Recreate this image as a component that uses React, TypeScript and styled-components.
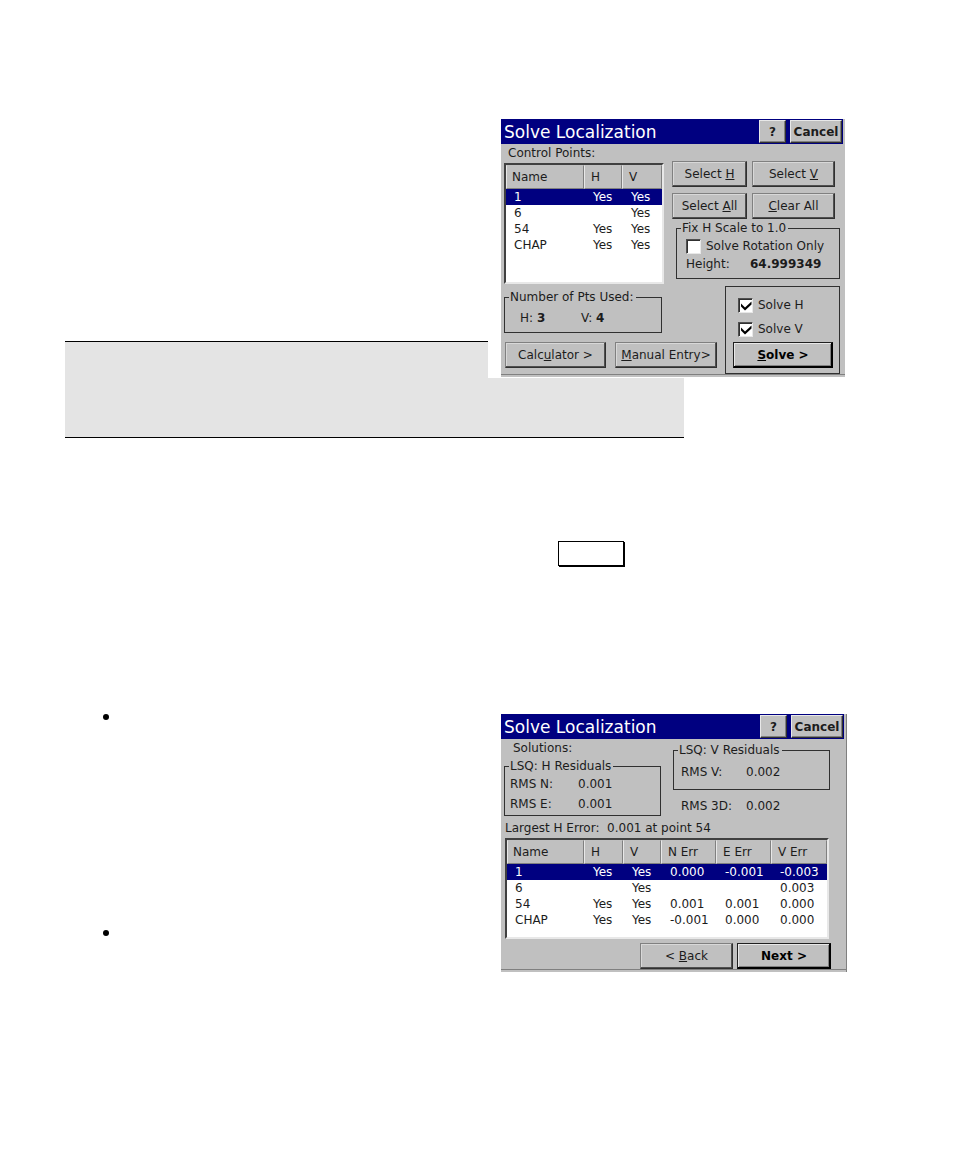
import React from "react";
import styled, { createGlobalStyle } from "styled-components";

const GlobalStyle = createGlobalStyle`
  *, *::before, *::after { box-sizing: border-box; }
  body {
    margin: 0;
    background: #fff;
    color: #1c1c1c;
    font-family: "DejaVu Sans", sans-serif;
    font-size: 12px;
    line-height: 16px;
  }
`;

const Page = styled.main`
  padding: 119px 107px 187px 65px;
`;

const Section = styled.section`
  display: flow-root;
`;

const Figure = styled.figure`
  float: right;
  margin: 0 2px 0 0;
  padding: 0 0 1px 13px;
  background: #fff;
`;

const Note = styled.aside`
  margin: 222px 163px 0 0;
  min-height: 97px;
  background: #e4e4e4;
  border: solid #000;
  border-width: 1px 0;
`;

const KeyLine = styled.div`
  display: flex;
  justify-content: flex-end;
  margin-top: 103px;
  padding-right: 223px;
`;

const KeyBox = styled.span`
  width: 66px;
  height: 25px;
  border: 1px solid #000;
  box-shadow: 1px 1px #000;
`;

const Steps = styled.section`
  display: flex;
  justify-content: space-between;
  margin-top: 148px;
`;

const BulletList = styled.ul`
  flex: 1;
  margin: 0;
  padding: 0 0 0 38px;
  list-style: none;
`;

const BulletItem = styled.li`
  min-height: 216px;
  &::before {
    content: "";
    display: block;
    width: 6px;
    height: 6px;
    border-radius: 50%;
    background: #000;
  }
  &:last-child { min-height: 42px; }
`;

const Dialog = styled.section<{ $edge?: boolean }>`
  width: ${(p) => (p.$edge ? 346 : 344)}px;
  padding-bottom: 2px;
  background: #c0c0c0;
  border-right: ${(p) => (p.$edge ? "1px solid #808080" : "0")};
`;

const TitleBar = styled.header`
  display: flex;
  align-items: center;
  gap: 4px;
  height: 25px;
  margin-right: 2px;
  padding: 0 1px 0 3px;
  background: #000080;
`;

const Title = styled.h2`
  flex: 1;
  margin: 0;
  color: #fff;
  font-size: 17px;
  font-weight: 400;
  line-height: 24px;
  white-space: nowrap;
`;

const Button = styled.button<{ $strong?: boolean; $width?: number; $title?: boolean }>`
  width: ${(p) => (p.$width ? p.$width + "px" : "100%")};
  height: ${(p) => (p.$title ? 23 : 26)}px;
  padding: 0;
  background: #c0c0c0;
  color: ${(p) => (p.$strong ? "#000" : "#1c1c1c")};
  border: 1px solid;
  border-color: ${(p) =>
    p.$title ? "#e8e8e8 #303030 #303030 #e8e8e8" : p.$strong ? "#202020 #000 #000 #202020" : "#808080 #303030 #303030 #808080"};
  box-shadow: ${(p) =>
    p.$title
      ? "inset -1px -1px #808080"
      : p.$strong
      ? "inset -1px -1px #000, inset 1px 1px #e8e8e8, inset -2px -2px #808080"
      : "inset -1px -1px #505050, inset 1px 1px #d8d8d8"};
  font-family: inherit;
  font-size: 12px;
  font-weight: ${(p) => (p.$strong || p.$title ? 700 : 400)};
  line-height: 16px;
  white-space: nowrap;
`;

const Content = styled.div`
  padding: 0 5px 0 3px;
  border-bottom: 1px solid #808080;
`;

const Row = styled.div`
  display: flex;
  justify-content: space-between;
`;

const PointsPane = styled.div`
  width: 160px;
`;

const Caption = styled.div<{ $indent: number }>`
  height: 19px;
  padding: 1px 0 0 ${(p) => p.$indent}px;
  white-space: nowrap;
`;

const ListBox = styled.div<{ $height: number }>`
  height: ${(p) => p.$height}px;
  background: #fff;
  border: 2px solid;
  border-color: #404040 #e8e8e8 #e8e8e8 #404040;
`;

const Table = styled.table`
  width: 100%;
  table-layout: fixed;
  border-collapse: separate;
  border-spacing: 0;
`;

const HeadCell = styled.th`
  height: 24px;
  padding: 0 0 0 6px;
  background: #c0c0c0;
  border: 1px solid;
  border-color: #c0c0c0 #808080 #808080 #e8e8e8;
  font-weight: 400;
  text-align: left;
  white-space: nowrap;
  &:first-child { padding-left: 5px; }
`;

const BodyRow = styled.tr<{ $selected: boolean }>`
  background: ${(p) => (p.$selected ? "#000080" : "#fff")};
  color: ${(p) => (p.$selected ? "#fff" : "#1c1c1c")};
`;

const Cell = styled.td`
  height: 16px;
  padding: 0 0 0 9px;
  line-height: 16px;
  white-space: nowrap;
  &:first-child { padding-left: 8px; }
`;

const ActionPane = styled.div`
  width: 164px;
  padding-top: 17px;
`;

const ButtonGrid = styled.div`
  display: grid;
  grid-template-columns: 75px 83px;
  gap: 6px 5px;
  margin: 0 0 1px -4px;
`;

const Group = styled.fieldset<{ $height: number }>`
  min-width: 0;
  height: ${(p) => p.$height}px;
  margin: 0;
  padding: 0 0 0 5px;
  border: 1px solid #303030;
`;

const Legend = styled.legend`
  margin-left: -1px;
  padding: 0 2px 0 1px;
  white-space: nowrap;
`;

const CheckLabel = styled.label`
  display: flex;
  align-items: center;
  gap: 5px;
  height: 18px;
  white-space: nowrap;
`;

const CheckFrame = styled.span`
  display: grid;
  width: 15px;
  height: 15px;
  & > * { grid-area: 1 / 1; }
  svg { visibility: hidden; pointer-events: none; z-index: 1; }
  input:checked + svg { visibility: visible; }
`;

const CheckInput = styled.input`
  appearance: none;
  width: 15px;
  height: 15px;
  margin: 0;
  background: #fff;
  border: 1px solid;
  border-color: #505050 #e8e8e8 #e8e8e8 #505050;
  box-shadow: inset 1px 1px #303030;
`;

const Reading = styled.div<{ $label: number; $line?: number }>`
  display: grid;
  grid-template-columns: ${(p) => p.$label}px auto;
  justify-content: start;
  line-height: ${(p) => p.$line ?? 18}px;
  white-space: nowrap;
`;

const ScaleFields = styled.div`
  display: grid;
  padding: 1px 0 0 4px;
`;

const Lower = styled(Row)`
  padding: 2px 0 0;
`;

const UsedPane = styled.div`
  width: 213px;
  padding-top: 3px;
`;

const UsedGroup = styled(Group)`
  width: 158px;
`;

const Counts = styled.div`
  display: grid;
  grid-template-columns: 61px auto;
  justify-content: start;
  padding: 5px 0 0 10px;
`;

const PairRow = styled(Row)`
  margin-top: 9px;
  padding-left: 1px;
`;

const SolvePanel = styled.div`
  width: 115px;
  height: 88px;
  padding: 9px 6px 0 7px;
  border: 1px solid #303030;
`;

const SolveChecks = styled.div`
  display: grid;
  gap: 6px;
  padding: 0 0 4px 5px;
`;

const Residuals = styled(Row)`
  height: 80px;
  padding-right: 11px;
`;

const ResidualPane = styled.div<{ $top?: number }>`
  width: 157px;
  padding-top: ${(p) => p.$top ?? 0}px;
`;

const Loose = styled.div`
  padding: 7px 0 0 8px;
`;

const ValuePad = styled.div`
  padding: 5px 0 0 2px;
`;

const ResultBox = styled.div`
  padding: 0 12px 4px 1px;
`;

const Footer = styled.div`
  display: flex;
  justify-content: flex-end;
  gap: 4px;
  padding-right: 10px;
`;

function Check({ label, checked }: { label: string; checked?: boolean }) {
  return (
    <CheckLabel>
      <CheckFrame>
        <CheckInput type="checkbox" defaultChecked={checked} />
        <svg width="15" height="15" viewBox="0 0 15 15" aria-hidden="true">
          <path d="M3 5.5v3L7 12.5l6.5-6v-3L7 9.5z" fill="#000" />
        </svg>
      </CheckFrame>
      {label}
    </CheckLabel>
  );
}

function TitleRow() {
  return (
    <TitleBar>
      <Title>Solve Localization</Title>
      <Button type="button" $title $width={27}>?</Button>
      <Button type="button" $title $width={52}>Cancel</Button>
    </TitleBar>
  );
}

type TableProps = { heads: string[]; widths: (number | undefined)[]; rows: string[][] };

function PointTable({ heads, widths, rows }: TableProps) {
  return (
    <Table>
      <colgroup>
        {widths.map((w, i) => <col key={i} width={w} />)}
      </colgroup>
      <thead>
        <tr>{heads.map((h) => <HeadCell key={h} scope="col">{h}</HeadCell>)}</tr>
      </thead>
      <tbody>
        {rows.map((r, i) => (
          <BodyRow key={r[0]} $selected={i === 0}>
            {r.map((c, j) => <Cell key={j}>{c}</Cell>)}
          </BodyRow>
        ))}
      </tbody>
    </Table>
  );
}

const points = [
  ["1", "Yes", "Yes"],
  ["6", "", "Yes"],
  ["54", "Yes", "Yes"],
  ["CHAP", "Yes", "Yes"],
];

const results = [
  ["1", "Yes", "Yes", "0.000", "-0.001", "-0.003"],
  ["6", "", "Yes", "", "", "0.003"],
  ["54", "Yes", "Yes", "0.001", "0.001", "0.000"],
  ["CHAP", "Yes", "Yes", "-0.001", "0.000", "0.000"],
];

function SolveDialog() {
  return (
    <Dialog>
      <TitleRow />
      <Content>
        <Row>
          <PointsPane>
            <Caption $indent={4}>Control Points:</Caption>
            <ListBox $height={121}>
              <PointTable heads={["Name", "H", "V"]} widths={[78, 38, undefined]} rows={points} />
            </ListBox>
          </PointsPane>
          <ActionPane>
            <ButtonGrid>
              <Button type="button">Select <u>H</u></Button>
              <Button type="button">Select <u>V</u></Button>
              <Button type="button">Select <u>A</u>ll</Button>
              <Button type="button"><u>C</u>lear All</Button>
            </ButtonGrid>
            <Group $height={59}>
              <Legend>Fix H Scale to 1.0</Legend>
              <ScaleFields>
                <Check label="Solve Rotation Only" />
                <Reading $label={64}><span>Height:</span><b>64.999349</b></Reading>
              </ScaleFields>
            </Group>
          </ActionPane>
        </Row>
        <Lower>
          <UsedPane>
            <UsedGroup $height={44}>
              <Legend>Number of Pts Used:</Legend>
              <Counts>
                <span>H: <b>3</b></span>
                <span>V: <b>4</b></span>
              </Counts>
            </UsedGroup>
            <PairRow>
              <Button type="button" $width={101}>Calc<u>u</u>lator &gt;</Button>
              <Button type="button" $width={102}><u>M</u>anual Entry&gt;</Button>
            </PairRow>
          </UsedPane>
          <SolvePanel>
            <SolveChecks>
              <Check label="Solve H" checked />
              <Check label="Solve V" checked />
            </SolveChecks>
            <Button type="button" $strong><u>S</u>olve &gt;</Button>
          </SolvePanel>
        </Lower>
      </Content>
    </Dialog>
  );
}

function ResultsDialog() {
  return (
    <Dialog $edge>
      <TitleRow />
      <Content>
        <Residuals>
          <ResidualPane>
            <Caption $indent={9}>Solutions:</Caption>
            <Group $height={58}>
              <Legend>LSQ: H Residuals</Legend>
              <Reading $label={68} $line={20}><span>RMS N:</span><span>0.001</span></Reading>
              <Reading $label={68} $line={20}><span>RMS E:</span><span>0.001</span></Reading>
            </Group>
          </ResidualPane>
          <ResidualPane $top={3}>
            <Group $height={48}>
              <Legend>LSQ: V Residuals</Legend>
              <ValuePad>
                <Reading $label={65}><span>RMS V:</span><span>0.002</span></Reading>
              </ValuePad>
            </Group>
            <Loose>
              <Reading $label={65}><span>RMS 3D:</span><span>0.002</span></Reading>
            </Loose>
          </ResidualPane>
        </Residuals>
        <Caption $indent={1}>Largest H Error:&nbsp; 0.001 at point 54</Caption>
        <ResultBox>
          <ListBox $height={101}>
            <PointTable
              heads={["Name", "H", "V", "N Err", "E Err", "V Err"]}
              widths={[77, 39, 38, 55, 55, undefined]}
              rows={results}
            />
          </ListBox>
        </ResultBox>
        <Footer>
          <Button type="button" $width={93}>&lt; <u>B</u>ack</Button>
          <Button type="button" $strong $width={94}>Next &gt;</Button>
        </Footer>
      </Content>
    </Dialog>
  );
}

export default function App() {
  return (
    <>
      <GlobalStyle />
      <Page>
        <Section>
          <Figure><SolveDialog /></Figure>
          <Note />
        </Section>
        <KeyLine><KeyBox /></KeyLine>
        <Steps>
          <BulletList>
            <BulletItem />
            <BulletItem />
          </BulletList>
          <ResultsDialog />
        </Steps>
      </Page>
    </>
  );
}
